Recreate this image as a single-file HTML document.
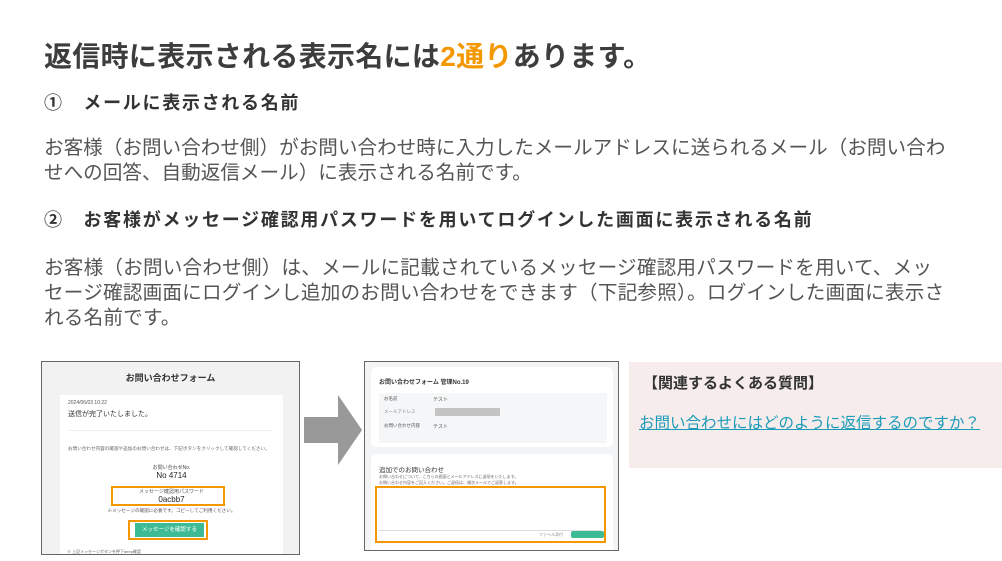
<!DOCTYPE html>
<html><head><meta charset="utf-8"><style>
body{margin:0;width:1002px;height:561px;background:#fff;position:relative;overflow:hidden;font-family:"Liberation Sans","Noto Sans CJK JP",sans-serif;color:#444}
.a{position:absolute;white-space:nowrap}
.t{font-size:28px;font-weight:bold;left:44px;top:35px;color:#3d3d3d;letter-spacing:0.3px}
.h{font-size:18px;font-weight:bold;left:44px;color:#333;letter-spacing:1.7px}
.b{font-size:19.6px;left:44px;color:#555;line-height:25px}
.s{font-size:7px;color:#555}
</style></head><body>
<div class="a t">返信時に表示される表示名には<span style="color:#f39800">2通り</span>あります。</div>
<div class="a h" style="top:89px">①　メールに表示される名前</div>
<div class="a b" style="top:136px">お客様（お問い合わせ側）がお問い合わせ時に入力したメールアドレスに送られるメール（お問い合わ<br>せへの回答、自動返信メール）に表示される名前です。</div>
<div class="a h" style="top:206px;letter-spacing:1.75px">②　お客様がメッセージ確認用パスワードを用いてログインした画面に表示される名前</div>
<div class="a b" style="top:256px;letter-spacing:0.2px">お客様（お問い合わせ側）は、メールに記載されているメッセージ確認用パスワードを用いて、メッ<br>セージ確認画面にログインし追加のお問い合わせをできます（下記参照）。ログインした画面に表示さ<br>れる名前です。</div>

<!-- left screenshot -->
<div class="a" style="left:41px;top:361px;width:257px;height:192px;border:1px solid #666;background:#f2f2f2;overflow:hidden">
 <div class="a" style="left:0;width:257px;top:9px;text-align:center;font-size:9px;font-weight:bold;color:#333">お問い合わせフォーム</div>
 <div class="a" style="left:18px;top:33px;width:223px;height:170px;background:#fff">
  <div class="a s" style="left:8px;top:5px;font-size:5px">2024/06/03 10:22</div>
  <div class="a" style="left:8px;top:14px;font-size:7px;color:#333">送信が完了いたしました。</div>
  <div class="a" style="left:8px;top:35px;width:205px;border-top:1px solid #eee"></div>
  <div class="a" style="left:8px;top:51px;font-size:4.6px;color:#666">お問い合わせ内容の確認や追加のお問い合わせは、下記ボタンをクリックして確認してください。</div>
  <div class="a" style="left:0;width:223px;top:69px;text-align:center;font-size:5px;color:#444">お問い合わせNo.</div>
  <div class="a" style="left:0;width:223px;top:76px;text-align:center;font-size:8px;color:#222">No 4714</div>
  <div class="a" style="left:51px;top:91px;width:110px;height:16px;border:2px solid #f39800"></div>
  <div class="a" style="left:0;width:223px;top:93px;text-align:center;font-size:5px;color:#555">メッセージ確認用パスワード</div>
  <div class="a" style="left:0;width:223px;top:100px;text-align:center;font-size:8px;color:#222">0acbb7</div>
  <div class="a" style="left:0;width:223px;top:113px;text-align:center;font-size:4.6px;color:#555">※メッセージの確認に必要です。コピーしてご利用ください。</div>
  <div class="a" style="left:68px;top:125px;width:76px;height:16px;border:2px solid #f39800;background:#fff"><div style="margin:1px 2px 1px 5px;height:14px;background:#3dbb94;color:#fff;font-size:5.5px;text-align:center;line-height:14px">メッセージを確認する</div></div>
 </div>
 <div class="a" style="left:25px;top:187px;font-size:4px;color:#666">※ 上記メッセージボタンを押下deep確認</div>
</div>

<!-- arrow -->
<svg class="a" style="left:304px;top:395px" width="58" height="70"><polygon points="0,22 34,22 34,0 58,35 34,70 34,48 0,48" fill="#999"/></svg>

<!-- right screenshot -->
<div class="a" style="left:364px;top:361px;width:253px;height:188px;border:1px solid #666;background:#f3f4f6;overflow:hidden">
 <div class="a" style="left:6px;top:5px;width:242px;height:80px;background:#fff;border-radius:5px">
  <div class="a" style="left:8px;top:10px;font-size:6px;font-weight:bold;color:#333">お問い合わせフォーム 管理No.19</div>
  <div class="a" style="left:8px;top:26px;width:228px;height:50px;background:#f5f6f7"></div>
  <div class="a s" style="left:13px;top:29px;font-size:4.5px">お名前</div><div class="a s" style="left:62px;top:29px;font-size:5px">テスト</div>
  <div class="a s" style="left:13px;top:42px;font-size:4.5px;color:#888">メールアドレス</div><div class="a" style="left:64px;top:41px;width:65px;height:8px;background:#c4c4c4"></div>
  <div class="a s" style="left:13px;top:56px;font-size:4.5px">お問い合わせ内容</div><div class="a s" style="left:62px;top:56px;font-size:5px">テスト</div>
 </div>
 <div class="a" style="left:6px;top:92px;width:242px;height:100px;background:#fff;border-radius:5px">
  <div class="a" style="left:8px;top:10px;font-size:6.5px;color:#333">追加でのお問い合わせ</div>
  <div class="a" style="left:8px;top:20px;font-size:4px;color:#666">お問い合わせについて、こちらの画面とメールアドレスに返信をいたします。<br>お問い合わせ内容をご記入ください。ご返信は、順次メールでご返答します。</div>
  <div class="a" style="left:4px;top:32px;width:227px;height:53px;border:2px solid #f39800"></div>
  <div class="a" style="left:8px;top:76px;width:222px;border-top:1px solid #ddd"></div>
  <div class="a" style="left:168px;top:78px;font-size:4px;color:#888">ファイル添付</div>
  <div class="a" style="left:200px;top:77px;width:33px;height:7px;background:#3dbb94;border-radius:2px"></div>
 </div>
</div>

<!-- related FAQ -->
<div class="a" style="left:629px;top:362px;width:373px;height:106px;background:#f7ecec">
 <div class="a" style="left:14px;top:10px;font-size:15px;font-weight:bold;color:#333">【関連するよくある質問】</div>
 <div class="a" style="left:10px;top:49px;font-size:15.5px;color:#1a9bb8;text-decoration:underline">お問い合わせにはどのように返信するのですか？</div>
</div>
</body></html>
